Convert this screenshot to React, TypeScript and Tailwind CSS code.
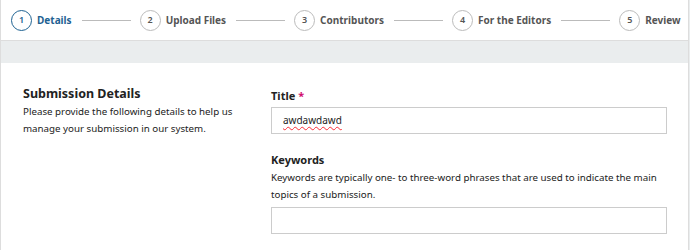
import React from "react";

const steps = ["Details", "Upload Files", "Contributors", "For the Editors", "Review"];

function Step({ n, label, active }: { n: number; label: string; active?: boolean }) {
  return (
    <div className="flex shrink-0 items-center">
      <span
        className={
          "flex h-[21px] w-[21px] items-center justify-center rounded-full border text-[9px] font-semibold " +
          (active ? "border-[#1e6292] text-[#1e6292]" : "border-[#bbbbbb] text-[#555]")
        }
      >
        {n}
      </span>
      <span className={"ml-[5px] text-[10px] font-bold " + (active ? "text-[#1e6292]" : "text-[#555]")}>{label}</span>
    </div>
  );
}

export default function App() {
  return (
    <div className="h-[250px] w-[690px] overflow-hidden bg-[#eaedee] font-['Noto_Sans',sans-serif] text-[#222]">
      <div className="w-[689px] border-r border-l border-[#dddddd]">
        <div className="flex h-[41px] items-center overflow-hidden border-b border-[#dddddd] bg-white pl-[10px]">
          {steps.map((s, i) => (
            <React.Fragment key={s}>
              <Step n={i + 1} label={s} active={i === 0} />
              <span className="mr-[9px] ml-[10px] h-px w-[49px] shrink-0 bg-[#bbbbbb]" />
            </React.Fragment>
          ))}
        </div>

        <div className="mt-[22px] flex h-[200px] bg-white">
          <div className="w-[270px] shrink-0 pt-[22px] pl-[22px]">
            <h2 className="text-[12.5px] font-bold leading-[18px]">Submission Details</h2>
            <p className="w-[220px] text-[9.75px] leading-[17px]">
              Please provide the following details to help us manage your submission in our system.
            </p>
          </div>
          <div className="w-[396px] pt-[25px]">
            <label className="block text-[11px] font-bold leading-[16px]">
              Title <span className="text-[#d00a6c]">*</span>
            </label>
            <div className="mt-[3px] flex h-[27px] items-center border border-[#cccccc] px-[11px] text-[10px]">
              <span className="underline decoration-red-500 decoration-wavy decoration-1 underline-offset-2">awdawdawd</span>
            </div>
            <label className="mt-[18px] block text-[11px] font-bold leading-[16px]">Keywords</label>
            <p className="mt-[1px] text-[9.75px] leading-[17px]">
              Keywords are typically one- to three-word phrases that are used to indicate the main topics of a submission.
            </p>
            <div className="mt-[4px] h-[27px] border border-[#cccccc]" />
          </div>
        </div>
      </div>
    </div>
  );
}
